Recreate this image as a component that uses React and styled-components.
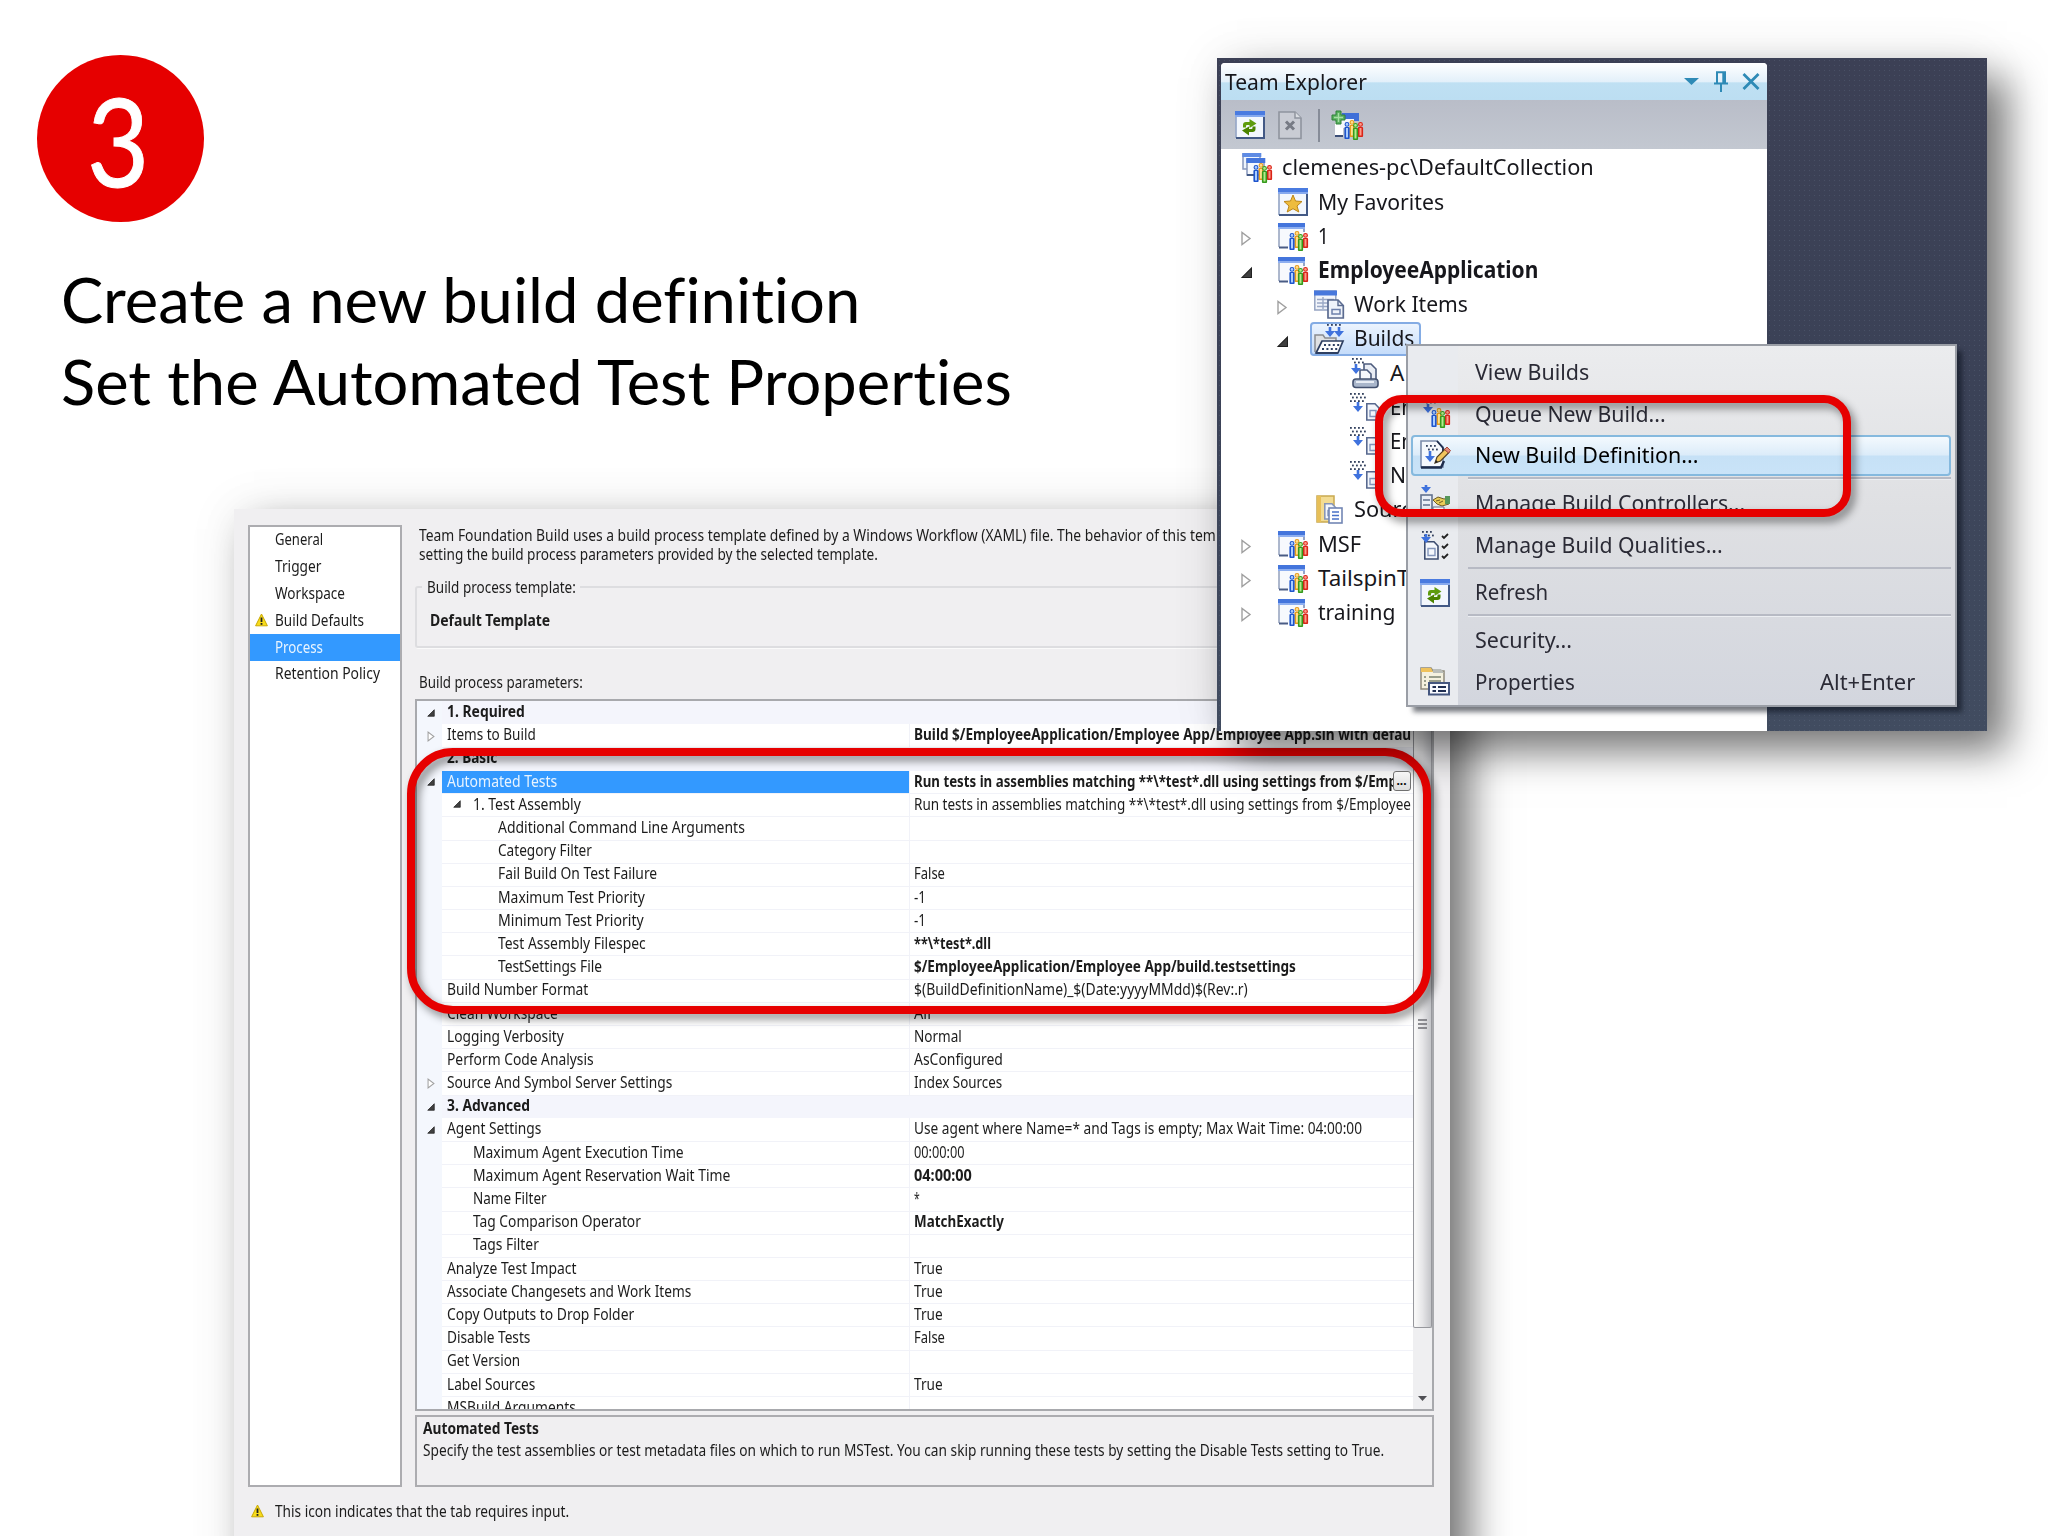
import React, { useLayoutEffect, useRef, useState } from "react";
import styled, { createGlobalStyle, css } from "styled-components";

const GlobalStyle = createGlobalStyle`
  * { box-sizing: border-box; }
  body {
    margin: 0;
    background: #fff;
    font-family: "Noto Sans", "Open Sans", sans-serif;
  }
`;

/* ---------- text that is squeezed to a given width ---------- */

const FitBox = styled.span`
  display: block;
  flex: none;
  white-space: pre;
`;
const FitInner = styled.span`
  display: inline-block;
  transform-origin: 0 50%;
`;

function Fit({ w, children }) {
  const ref = useRef(null);
  const [scale, setScale] = useState(1);
  useLayoutEffect(() => {
    if (w) setScale(w / ref.current.offsetWidth);
  }, [w, children]);
  return (
    <FitBox style={{ width: w }}>
      <FitInner ref={ref} style={{ transform: `scaleX(${scale})` }}>
        {children}
      </FitInner>
    </FitBox>
  );
}

/* ---------- slide ---------- */

const Slide = styled.main`
  position: relative;
  width: 2048px;
  height: 1536px;
  overflow: hidden;
  background: #fff;
`;
const Intro = styled.header`
  display: flex;
  flex-direction: column;
  align-items: flex-start;
  padding: 55px 0 0 37px;
  font-family: Lato, sans-serif;
  font-variant-ligatures: none;
`;
const StepNumber = styled.div`
  width: 167px;
  height: 167px;
  border-radius: 50%;
  background: #e60000;
  color: #fff;
  font-size: 123px;
  line-height: 169px;
  padding-left: 50px;
  -webkit-text-stroke: 1px #fff;
`;
const Title = styled.h1`
  margin: 37px 0 0 24px;
  font-size: 61px;
  font-weight: 400;
  line-height: 82px;
  color: #000;
`;
const Ring = styled.div`
  position: absolute;
  left: ${(p) => p.$x}px;
  top: ${(p) => p.$y}px;
  width: ${(p) => p.$w}px;
  height: ${(p) => p.$h}px;
  border: 8.4px solid #e60000;
  border-radius: ${(p) => p.$r}px;
  filter: drop-shadow(4px 5px 4px rgba(0, 0, 0, 0.45));
`;

/* ---------- build definition panel ---------- */

const BuildPanel = styled.section`
  position: absolute;
  left: 234px;
  top: 509px;
  width: 1216px;
  height: 1080px;
  padding: 16px 16px 0 14px;
  background: #f0eff1;
  box-shadow: 20px 20px 38px rgba(0, 0, 0, 0.52), 0 0 50px rgba(0, 0, 0, 0.07);
  font-size: 15.5px;
  color: #1c1c1c;
`;
const PanelBody = styled.div`
  display: flex;
  gap: 13px;
  height: 962px;
`;
const Tabs = styled.nav`
  width: 154px;
  border: 2px solid #acacb0;
  background: #fff;
`;
const Tab = styled.div`
  display: flex;
  align-items: center;
  height: 26.8px;
  line-height: 24px;
  padding-bottom: 2px;
  ${(p) =>
    p.$active &&
    css`
      background: #3399ff;
      color: #e8f4ff;
    `}
`;
const TabIcon = styled.span`
  display: flex;
  width: 25px;
  padding-left: 4.5px;
`;
const Content = styled.div`
  flex: 1;
  display: flex;
  flex-direction: column;
`;
const Description = styled.div`
  padding: 1px 0 0 4px;
  line-height: 18.6px;
`;
const TemplateGroup = styled.fieldset`
  margin: 14px 0 0 0;
  padding: 12px 0 0 12.5px;
  height: 71px;
  min-width: 0;
  border: 2px solid #dddde0;
  border-radius: 3px;
  box-shadow: 0 2px 0 -1px #fafafa;
  legend {
    padding: 0 4px 0 5px;
    margin-left: -8px;
    line-height: 20px;
  }
`;
const GridLabel = styled.div`
  margin: 24px 0 0 4px;
  height: 27px;
  line-height: 21px;
`;
const Grid = styled.div`
  display: flex;
  height: 713px;
  border: 2px solid #a8a9ad;
  background: #fff;
  overflow: hidden;
`;
const Rows = styled.div`
  flex: 1;
  min-width: 0;
  overflow: hidden;
`;
const Row = styled.div`
  display: grid;
  grid-template-columns: 25px 467px 1fr;
  height: 23.2px;
  line-height: 21px;
  background: ${(p) => (p.$category ? "#f4f5fc" : "#fff")};
  font-weight: ${(p) => (p.$category ? 700 : 400)};
`;
const Gutter = styled.div`
  display: flex;
  align-items: center;
  justify-content: center;
  padding-left: 2px;
  background: #f4f7fd;
`;
const NameCell = styled.div`
  display: flex;
  align-items: center;
  padding-left: ${(p) => 5 + p.$level * 25.7}px;
  padding-bottom: 1.5px;
  border-bottom: 1px solid ${(p) => (p.$category ? "transparent" : "#f1f2f8")};
  ${(p) =>
    p.$selected &&
    css`
      background: #3399ff;
      color: #e8f4ff;
    `}
`;
const InlineArrow = styled.span`
  display: flex;
  width: 20px;
  margin-left: -20px;
`;
const ValueCell = styled.div`
  display: flex;
  align-items: center;
  min-width: 0;
  padding: 0 0 1.5px 4px;
  overflow: hidden;
  border-left: 1px solid ${(p) => (p.$category ? "transparent" : "#f1f2f8")};
  border-bottom: 1px solid ${(p) => (p.$category ? "transparent" : "#f1f2f8")};
  font-weight: ${(p) => (p.$bold ? 700 : 400)};
`;
const MoreButton = styled.button`
  position: relative;
  z-index: 1;
  flex: none;
  width: 18px;
  height: 20px;
  margin-left: -4.5px;
  padding: 0;
  border: 1.5px solid #707070;
  border-radius: 3px;
  background: linear-gradient(#f6f6f6, #dcdcdc);
  font: 700 12px/12px "Noto Sans", sans-serif;
`;
const ScrollBar = styled.div`
  display: flex;
  flex-direction: column;
  width: 19.5px;
  background: #efeff1;
`;
const Thumb = styled.div`
  display: flex;
  align-items: center;
  justify-content: center;
  height: 627px;
  padding-top: 20px;
  border: 1.5px solid #97989d;
  border-top: 0;
  border-radius: 2px;
  background: linear-gradient(90deg, #f7f7f7 10%, #e6e6e8 50%, #c4c5c9);
`;
const ScrollArrow = styled.div`
  display: flex;
  flex: 1;
  align-items: flex-end;
  justify-content: center;
  padding-bottom: 7px;
`;
const HelpBox = styled.div`
  margin-top: 4px;
  height: 72px;
  padding: 0 5.5px;
  border: 2px solid #acacb0;
  line-height: 22px;
  strong { display: block; }
`;
const Footer = styled.div`
  display: flex;
  align-items: center;
  gap: 11px;
  padding: 13px 0 0 3px;
`;

/* ---------- team explorer ---------- */

const ExplorerWindow = styled.section`
  position: absolute;
  left: 1217px;
  top: 58px;
  width: 770px;
  height: 673px;
  padding: 5px 0 0 4px;
  background:
    radial-gradient(circle, rgba(110, 125, 145, 0.28) 0.7px, transparent 1px) 0 0 / 5px 5px,
    linear-gradient(#3c4055, #3b4257 50%, #414c60);
  box-shadow: 20px 20px 38px rgba(0, 0, 0, 0.52), 0 0 50px rgba(0, 0, 0, 0.07);
  font-size: 22.4px;
  color: #17171c;
`;
const Explorer = styled.div`
  display: flex;
  flex-direction: column;
  width: 546px;
  height: 668px;
  background: #fff;
  border-radius: 4px 4px 0 0;
  overflow: hidden;
`;
const TitleBar = styled.div`
  display: flex;
  align-items: center;
  height: 37px;
  line-height: 36px;
  padding: 0 7px 0 4px;
  background: linear-gradient(#ffffff, #e3f0fa 50%, #bfe0f3 54%, #bcdef2);
`;
const TitleButtons = styled.div`
  display: flex;
  align-items: center;
  gap: 14.5px;
  margin-left: auto;
`;
const Toolbar = styled.div`
  display: flex;
  align-items: center;
  height: 49px;
  padding: 1px 0 0 14px;
  background: linear-gradient(#b9bdc8, #c3c8d1);
`;
const ToolDivider = styled.span`
  width: 2px;
  height: 33px;
  margin: 0 12px 0 15.5px;
  background: #868c98;
`;
const ToolGap = styled.span`
  width: 13px;
`;
const Tree = styled.div`
  padding-top: 2.4px;
`;
const TreeRow = styled.div`
  display: flex;
  align-items: center;
  height: 34.2px;
  line-height: 30px;
  padding-left: ${(p) => (p.$level ? p.$level * 36 - 18 : 0)}px;
  font-weight: ${(p) => (p.$bold ? 700 : 400)};
`;
const TreeArrow = styled.span`
  display: flex;
  align-items: center;
  width: ${(p) => (p.$root ? 21 : 39)}px;
  padding: 4px 0 0 2px;
`;
const TreeLabel = styled.span`
  padding-bottom: 2px;
`;
const TreeItem = styled.span`
  display: flex;
  align-items: center;
  gap: 10px;
  height: 34px;
  ${(p) =>
    p.$selected &&
    css`
      margin-left: -4px;
      padding: 0 4px 0 2px;
      width: 111px;
      border: 2px solid #84ace4;
      border-radius: 4px;
      background: linear-gradient(#ecf4fe, #c5dcfa);
    `}
`;

const Menu = styled.div`
  position: absolute;
  left: 188.5px;
  top: 286px;
  width: 551.5px;
  height: 363px;
  padding: 6px 4px 0 3.5px;
  border: 2px solid #9a9ea6;
  background:
    linear-gradient(90deg, #e9ebef 50px, transparent 50px),
    linear-gradient(#ebecee, #dfe0e3 45%, #d3d6de);
  box-shadow: 6px 6px 5px -1px rgba(10, 14, 25, 0.55);
  color: #2a2a35;
`;
const MenuItem = styled.div`
  display: flex;
  align-items: center;
  height: 41.8px;
  line-height: 36px;
  padding-right: 34px;
  border: 2px solid transparent;
  ${(p) =>
    p.$active &&
    css`
      margin: -1px 0 1px;
      border-color: #85b9de;
      border-radius: 4px;
      background: linear-gradient(#f3f9fe, #dcecf9 48%, #c6e1f6 52%, #c9e3f8);
      color: #000;
    `}
`;
const MenuIcon = styled.span`
  display: flex;
  width: 62px;
  padding-left: 7px;
`;
const MenuLabel = styled.span`
  padding-bottom: 1.4px;
`;
const Shortcut = styled.span`
  margin-left: auto;
  padding-bottom: 1.4px;
`;
const MenuRule = styled.div`
  height: 5.6px;
  margin-left: 57px;
  background: linear-gradient(#b7bac4 1.5px, #eceef2 1.5px, #eceef2 2.5px, transparent 2.5px);
`;

/* ---------- icons ---------- */

const Drawing = styled.svg`
  flex: none;
  overflow: visible;
`;

function Svg({ w = 30, h = 30, box, children }) {
  return (
    <Drawing width={w} height={h} viewBox={box || `0 0 ${w} ${h}`} fill="none">
      {children}
    </Drawing>
  );
}

const Expanded = ({ size = 11 }) => (
  <Svg w={size} h={size} box="0 0 11 11">
    <path d="M10 1V10H1Z" fill="#404040" stroke="#1e1e1e" />
  </Svg>
);
const Collapsed = ({ w = 10, h = 15 }) => (
  <Svg w={w} h={h} box="0 0 10 15">
    <path d="M1 1.5V13.5L9 7.5Z" fill="#fff" stroke="#a0a0a0" strokeWidth="1.4" />
  </Svg>
);

function Warning() {
  return (
    <Svg w={13} h={14}>
      <path d="M6.5 1L12.4 12.8H0.6Z" fill="#f8dc1c" stroke="#c9a800" strokeLinejoin="round" />
      <path d="M6.5 4.5V9" stroke="#222" strokeWidth="1.8" />
      <rect x="5.6" y="10" width="1.8" height="1.8" fill="#222" />
    </Svg>
  );
}

function Frame({ x = 0, y = 0, w = 29, h = 27 }) {
  return (
    <g transform={`translate(${x} ${y})`}>
      <rect x="0.7" y="0.7" width={w} height={h} fill="#f3f7fd" />
      <path d={`M1 1V${h}`} stroke="#92a3c4" strokeWidth="1.6" />
      <path d={`M${w} 1V${h}H1`} stroke="#435985" strokeWidth="2" />
      <rect y="0" width={w + 1} height="6" fill="#4a7be0" />
      <rect y="4" width={w + 1} height="2" fill="#86a9ee" />
    </g>
  );
}

function Person({ x, y, color, light, h = 12 }) {
  return (
    <g transform={`translate(${x} ${y})`}>
      <circle cx="3" cy="2.4" r="1.9" fill={light} stroke={color} strokeWidth="1.1" />
      <rect x="0.4" y="5" width="5.2" height={h} rx="1" fill={color} />
      <path d={`M3 6V${h + 3.5}`} stroke={light} strokeWidth="2" />
    </g>
  );
}

function People({ x = 11, y = 9 }) {
  return (
    <g transform={`translate(${x} ${y})`}>
      <Person x={5} y={0} color="#e69a1e" light="#ffdf8a" />
      <Person x={13.5} y={2} color="#d92418" light="#ff9a88" h={10} />
      <Person x={0} y={2} color="#1f55cc" light="#a9ccff" />
      <Person x={8.5} y={3} color="#359a1d" light="#b4eb8c" />
    </g>
  );
}

const ProjectIcon = () => (
  <Svg>
    <rect x="0.7" y="1" width="26" height="25" fill="#f7f9fd" />
    <path d="M1 1V25" stroke="#93a0bc" strokeWidth="1.5" />
    <path d="M1 25.5H10" stroke="#4a5c85" strokeWidth="2" />
    <path d="M26 6V10" stroke="#7387b3" strokeWidth="1.5" />
    <rect y="1" width="27" height="5.5" fill="#4475dc" />
    <rect y="5" width="27" height="2" fill="#8eaff0" />
    <People />
  </Svg>
);
const CollectionIcon = () => (
  <Svg>
    <rect x="1" y="1" width="17" height="15" fill="#eef4fd" stroke="#8797bb" strokeWidth="1.5" />
    <rect x="0.3" y="0" width="19" height="4" fill="#5e8be4" />
    <rect x="5" y="6" width="17" height="16" fill="#f5f8fe" stroke="#8797bb" strokeWidth="1.5" />
    <rect x="4.3" y="5" width="19" height="5" fill="#4475dc" />
    <path d="M5 22H12" stroke="#435985" strokeWidth="2" />
    <People y={10} />
  </Svg>
);
const AddProjectIcon = () => (
  <Svg w={31} h={30}>
    <path d="M3 12V26H11V12Z" fill="#fff" />
    <path d="M3 26H11" stroke="#3d4f78" strokeWidth="2" />
    <rect x="10" y="3" width="17" height="8" fill="#3f6fd8" />
    <rect x="8" y="9" width="14" height="9" fill="#f3f6fc" />
    <path d="M4 1H9V5H13V10H9V14H4V10H0V5H4Z" fill="#58b05e" stroke="#2f8039" />
    <path d="M6.500 3V12M2 7.500H11" stroke="#a5dfa3" strokeWidth="1.4" />
    <People x={12} y={10} />
  </Svg>
);
const RefreshIcon = () => (
  <Svg h={29}>
    <Frame />
    <path d="M8 16.500V14Q8 11 11 11H14.500V8L21.500 12.500L14.500 17V14H12Q11 14 11 15V16.500Z" fill="#5e9c0e" />
    <path d="M20.500 15.500V18Q20.500 21 17.500 21H14V24.500L7 19.500L14 15.500V18H16.500Q17.500 18 17.500 17V15.500Z" fill="#4b8400" />
  </Svg>
);
const StarIcon = () => (
  <Svg>
    <Frame />
    <path d="M15 7L17.500 13L24 13.500L19 18L20.800 24L15 20.700L9.200 24L11 18L6 13.500L12.500 13Z" fill="#eebc3e" stroke="#bc8618" />
  </Svg>
);
const DeletePageIcon = () => (
  <Svg w={24} h={29}>
    <path d="M1 1H17L23 7V27.500H1Z" fill="#c9ccd4" stroke="#8f949e" strokeWidth="1.6" />
    <path d="M17 1V7H23" stroke="#8f949e" strokeWidth="1.5" fill="#dadde2" />
    <path d="M8 10.500L16 18.500M16 10.500L8 18.500" stroke="#777b85" strokeWidth="3" />
  </Svg>
);

function Arrow({ x = 8, y = 0, h = 10 }) {
  return (
    <path
      transform={`translate(${x} ${y})`}
      d={`M-1.3 0H1.300V${h - 6}H5L0 ${h}L-5 ${h - 6}H-1.300Z`}
      fill="#3f72dd"
    />
  );
}
function Dots({ x = 0, y = 0, rows = 3, cols = 4 }) {
  const dots = [];
  for (let r = 0; r < rows; r++) {
    for (let c = 0; c < cols; c++) {
      dots.push(<rect key={`${r}-${c}`} x={x + c * 4 + (r % 2 ? 2 : 0)} y={y + r * 3.6} width="1.8" height="1.8" fill="#33415e" />);
    }
  }
  return <g>{dots}</g>;
}
function Page({ x, y, w = 12, h = 15, stroke = "#58698f" }) {
  return (
    <g transform={`translate(${x} ${y})`}>
      <path d={`M0.800 0.800H${w - 4}L${w} 5V${h}H0.800Z`} fill="#f4f7fc" stroke={stroke} strokeWidth="1.6" />
      <path d={`M4 7.500H${w - 3}V${h - 3.5}H4Z`} stroke="#8496bb" strokeWidth="1.4" />
    </g>
  );
}

const WorkItemsIcon = () => (
  <Svg>
    <rect x="0.8" y="1" width="21" height="19" fill="#f2f5fb" stroke="#96a4c2" strokeWidth="1.5" />
    <rect x="0" y="0.500" width="23" height="5" fill="#4878dc" />
    <path d="M3 9.500H20M3 13H20M3 16.500H14M9 7V19" stroke="#9aa8c6" strokeWidth="1.4" />
    <path d="M14 10H24L29.300 15.500V28H14Z" fill="#eff3fa" stroke="#5b6b90" strokeWidth="1.7" />
    <path d="M24 10V15.500H29" stroke="#5b6b90" strokeWidth="1.4" />
    <rect x="18" y="19.500" width="8" height="4.500" stroke="#6d80ab" strokeWidth="1.5" />
  </Svg>
);
const BuildsIcon = () => (
  <Svg>
    <path d="M1 28V11H9L11 14H22V18" fill="#dfe1e3" stroke="#8a8c90" strokeWidth="1.5" />
    <path d="M2 29L8 17H29L24 29Z" fill="#fdfdfd" stroke="#2e3f61" strokeWidth="1.7" />
    <path d="M2 29H24" stroke="#2e3f61" strokeWidth="2" />
    <Arrow x={16} y={3} h={10} />
    <Arrow x={25} y={3} h={10} />
    <Dots x={13} y={0} rows={1} />
    <path d="M10 21H26M8 25H24" stroke="#2e3f61" strokeWidth="1.8" strokeDasharray="2 2.4" />
  </Svg>
);
const AllDefsIcon = () => (
  <Svg>
    <path d="M14 5H21L26 10V23H14Z" fill="#e9edf4" stroke="#4d5c7d" strokeWidth="1.6" />
    <path d="M10 11H17L21 15V22H10Z" fill="#f6f8fb" stroke="#4d5c7d" strokeWidth="1.6" />
    <Dots x={2} y={-1} rows={2} cols={3} />
    <Arrow x={6} y={5} h={10} />
    <rect x="3" y="20" width="25" height="8.500" rx="3" fill="#a9b6cb" stroke="#43516f" strokeWidth="1.6" />
    <path d="M6 23H24" stroke="#e8edf5" strokeWidth="2" />
  </Svg>
);
const DefIcon = () => (
  <Svg>
    <Dots x={0} y={0} />
    <Arrow x={8} y={9} h={10} />
    <Page x={16} y={10} w={13} h={17} />
  </Svg>
);
const SourceIcon = () => (
  <Svg>
    <path d="M3 1H20V27H3Z" fill="#f3dc93" stroke="#c9a950" strokeWidth="1.5" />
    <path d="M3 27V1H7V27Z" fill="#e7bf58" />
    <Page x={10} y={8} w={12} h={16} stroke="#8796b6" />
    <rect x="15" y="13" width="13" height="15" fill="#fff" stroke="#7286b4" strokeWidth="1.6" />
    <path d="M18 17H25M18 20.500H25M18 24H25" stroke="#4a72c8" strokeWidth="1.6" />
  </Svg>
);
const QueueIcon = () => (
  <Svg>
    <Dots x={4} y={-2} rows={2} cols={3} />
    <Arrow x={8} y={4} h={9} />
    <People y={8} />
  </Svg>
);
const NewDefIcon = () => (
  <Svg>
    <path d="M1 1H17L23 7V27H1Z" fill="#f5f8fd" stroke="#7c8cab" strokeWidth="1.6" />
    <path d="M1 27.500H21L24 21" stroke="#1d2c4c" strokeWidth="2.4" />
    <path d="M17 1L23 8V12" stroke="#1d2c4c" strokeWidth="1.8" />
    <Dots x={6} y={5} rows={2} cols={3} />
    <Arrow x={10} y={11} h={11} />
    <path d="M15 23L17 17L25 9L29 12.500L20.500 21Z" fill="#f0c45c" stroke="#4e3d22" strokeWidth="1.2" />
    <path d="M24.500 9.500L27 7L30.500 10.500L28.500 13Z" fill="#e08a78" stroke="#a8493c" />
    <path d="M15 23L16 20L18 22Z" fill="#222" />
  </Svg>
);
const ControllersIcon = () => (
  <Svg>
    <Arrow x={6} y={-4} h={8} />
    <rect x="1" y="6" width="11" height="21" fill="#e9eef6" stroke="#62728f" strokeWidth="1.6" />
    <path d="M3 11H10M3 16H10M3 21H10" stroke="#62728f" strokeWidth="1.5" />
    <path d="M13 11L18 8L24 10L29 9V15L22 17L17 15Z" fill="#e9cd58" stroke="#6e5b23" />
    <path d="M16 12L20 11M19 14L23 12" stroke="#6e5b23" />
    <rect x="25" y="7" width="5" height="8" fill="#56965a" />
    <path d="M13 18H24V27H13Z" fill="#fff" stroke="#62728f" />
  </Svg>
);
const QualitiesIcon = () => (
  <Svg>
    <Dots x={2} y={0} rows={2} cols={3} />
    <Page x={4} y={10} w={14} h={18} stroke="#3d4d70" />
    <Arrow x={6} y={3} h={9} />
    <path d="M22 5L24 7L28 3M22 15L24 17L28 13M22 25L24 27L28 23" stroke="#222" strokeWidth="1.8" />
  </Svg>
);
const PropertiesIcon = () => (
  <Svg>
    <path d="M1 1H11L13 4H24V22H1Z" fill="#f4f1df" stroke="#8e8b7c" strokeWidth="1.5" />
    <path d="M1 1H11L13 5H1Z" fill="#efc25c" />
    <path d="M13 2H21L24 6H13Z" fill="#b9bdb9" />
    <path d="M4 10H6M4 14H6M4 18H6M9 10H21M9 14H21" stroke="#7b8372" strokeWidth="1.6" />
    <rect x="9" y="16" width="20" height="11.500" fill="#f8faff" stroke="#44567f" strokeWidth="2" />
    <path d="M12.500 20H16M12.500 24H16M18 20H26M18 24H26" stroke="#1f2e52" strokeWidth="1.8" />
  </Svg>
);

/* ---------- data ---------- */

const tabs = [
  { label: "General", w: 48 },
  { label: "Trigger", w: 46 },
  { label: "Workspace", w: 70 },
  { label: "Build Defaults", w: 89, warn: true },
  { label: "Process", w: 48, active: true },
  { label: "Retention Policy", w: 105 },
];

const rows = [
  { name: "1. Required", w: 78, category: true, state: "open" },
  { name: "Items to Build", w: 89, state: "closed", value: "Build $/EmployeeApplication/Employee App/Employee App.sln with defau", vw: 497, bold: true },
  { name: "2. Basic", w: 50, category: true },
  { name: "Automated Tests", w: 110, state: "open", selected: true, value: "Run tests in assemblies matching **\\*test*.dll using settings from $/Emp", vw: 483, bold: true },
  { name: "1. Test Assembly", w: 108, level: 1, inner: true, value: "Run tests in assemblies matching **\\*test*.dll using settings from $/Employee", vw: 497 },
  { name: "Additional Command Line Arguments", w: 247, level: 2 },
  { name: "Category Filter", w: 94, level: 2 },
  { name: "Fail Build On Test Failure", w: 159, level: 2, value: "False", vw: 31 },
  { name: "Maximum Test Priority", w: 147, level: 2, value: "-1", vw: 12 },
  { name: "Minimum Test Priority", w: 146, level: 2, value: "-1", vw: 12 },
  { name: "Test Assembly Filespec", w: 148, level: 2, value: "**\\*test*.dll", vw: 77, bold: true },
  { name: "TestSettings File", w: 104, level: 2, value: "$/EmployeeApplication/Employee App/build.testsettings", vw: 382, bold: true },
  { name: "Build Number Format", w: 141, value: "$(BuildDefinitionName)_$(Date:yyyyMMdd)$(Rev:.r)", vw: 334 },
  { name: "Clean Workspace", w: 111, value: "All", vw: 17 },
  { name: "Logging Verbosity", w: 117, value: "Normal", vw: 48 },
  { name: "Perform Code Analysis", w: 147, value: "AsConfigured", vw: 89 },
  { name: "Source And Symbol Server Settings", w: 225, state: "closed", value: "Index Sources", vw: 88 },
  { name: "3. Advanced", w: 83, category: true, state: "open" },
  { name: "Agent Settings", w: 94, state: "open", value: "Use agent where Name=* and Tags is empty; Max Wait Time: 04:00:00", vw: 448 },
  { name: "Maximum Agent Execution Time", w: 211, level: 1, value: "00:00:00", vw: 51 },
  { name: "Maximum Agent Reservation Wait Time", w: 257, level: 1, value: "04:00:00", vw: 58, bold: true },
  { name: "Name Filter", w: 74, level: 1, value: "*", vw: 6 },
  { name: "Tag Comparison Operator", w: 168, level: 1, value: "MatchExactly", vw: 90, bold: true },
  { name: "Tags Filter", w: 66, level: 1 },
  { name: "Analyze Test Impact", w: 129, value: "True", vw: 29 },
  { name: "Associate Changesets and Work Items", w: 244, value: "True", vw: 29 },
  { name: "Copy Outputs to Drop Folder", w: 187, value: "True", vw: 29 },
  { name: "Disable Tests", w: 83, value: "False", vw: 31 },
  { name: "Get Version", w: 73, value: "" },
  { name: "Label Sources", w: 88, value: "True", vw: 29 },
  { name: "MSBuild Arguments", w: 129 },
];

const tree = [
  { label: "clemenes-pc\\DefaultCollection", w: 312, level: 0, icon: <CollectionIcon /> },
  { label: "My Favorites", w: 126, level: 1, icon: <StarIcon /> },
  { label: "1", w: 11, level: 1, icon: <ProjectIcon />, state: "closed" },
  { label: "EmployeeApplication", w: 220, level: 1, icon: <ProjectIcon />, state: "open", bold: true },
  { label: "Work Items", w: 114, level: 2, icon: <WorkItemsIcon />, state: "closed" },
  { label: "Builds", w: 60, level: 2, icon: <BuildsIcon />, state: "open", selected: true },
  { label: "A", w: 14, level: 3, icon: <AllDefsIcon /> },
  { label: "Em", w: 30, level: 3, icon: <DefIcon /> },
  { label: "Em", w: 30, level: 3, icon: <DefIcon /> },
  { label: "N", w: 16, level: 3, icon: <DefIcon /> },
  { label: "Source", w: 70, level: 2, icon: <SourceIcon /> },
  { label: "MSF", w: 43, level: 1, icon: <ProjectIcon />, state: "closed" },
  { label: "TailspinToys", w: 125, level: 1, icon: <ProjectIcon />, state: "closed" },
  { label: "training", w: 77, level: 1, icon: <ProjectIcon />, state: "closed" },
];

const menu = [
  { label: "View Builds", w: 114 },
  { label: "Queue New Build...", w: 191, icon: <QueueIcon /> },
  { label: "New Build Definition...", w: 223, icon: <NewDefIcon />, active: true },
  { rule: true },
  { label: "Manage Build Controllers...", w: 270, icon: <ControllersIcon /> },
  { label: "Manage Build Qualities...", w: 248, icon: <QualitiesIcon /> },
  { rule: true },
  { label: "Refresh", w: 73, icon: <RefreshIcon /> },
  { rule: true },
  { label: "Security...", w: 97 },
  { label: "Properties", w: 100, icon: <PropertiesIcon />, shortcut: "Alt+Enter" },
];

/* ---------- parts ---------- */

function PropertyRow({ row }) {
  const level = row.level || 0;
  return (
    <Row $category={row.category}>
      <Gutter>
        {row.state === "open" && <Expanded size={8} />}
        {row.state === "closed" && <Collapsed w={8} h={11} />}
      </Gutter>
      <NameCell $level={level} $selected={row.selected} $category={row.category}>
        {row.inner && (
          <InlineArrow>
            <Expanded size={8} />
          </InlineArrow>
        )}
        <Fit w={row.w}>{row.name}</Fit>
      </NameCell>
      <ValueCell $bold={row.bold} $category={row.category}>
        {row.value && <Fit w={row.vw}>{row.value}</Fit>}
        {row.selected && <MoreButton>...</MoreButton>}
      </ValueCell>
    </Row>
  );
}

function BuildDefinition() {
  return (
    <BuildPanel>
      <PanelBody>
        <Tabs>
          {tabs.map((tab) => (
            <Tab key={tab.label} $active={tab.active}>
              <TabIcon>{tab.warn && <Warning />}</TabIcon>
              <Fit w={tab.w}>{tab.label}</Fit>
            </Tab>
          ))}
        </Tabs>
        <Content>
          <Description>
            <Fit w={797}>Team Foundation Build uses a build process template defined by a Windows Workflow (XAML) file. The behavior of this tem</Fit>
            <Fit w={459}>setting the build process parameters provided by the selected template.</Fit>
          </Description>
          <TemplateGroup>
            <legend><Fit w={149}>Build process template:</Fit></legend>
            <strong><Fit w={120}>Default Template</Fit></strong>
          </TemplateGroup>
          <GridLabel><Fit w={164}>Build process parameters:</Fit></GridLabel>
          <Grid>
            <Rows>
              {rows.map((row) => (
                <PropertyRow key={row.name} row={row} />
              ))}
            </Rows>
            <ScrollBar>
              <Thumb>
                <Svg w={9} h={10}>
                  <path d="M0 1H9M0 5H9M0 9H9" stroke="#6d6e73" strokeWidth="1.6" />
                </Svg>
              </Thumb>
              <ScrollArrow>
                <Svg w={9} h={6}>
                  <path d="M0 0H9L4.500 5Z" fill="#505055" />
                </Svg>
              </ScrollArrow>
            </ScrollBar>
          </Grid>
          <HelpBox>
            <strong><Fit w={116}>Automated Tests</Fit></strong>
            <Fit w={961}>Specify the test assemblies or test metadata files on which to run MSTest. You can skip running these tests by setting the Disable Tests setting to True.</Fit>
          </HelpBox>
        </Content>
      </PanelBody>
      <Footer>
        <Warning />
        <Fit w={294}>This icon indicates that the tab requires input.</Fit>
      </Footer>
    </BuildPanel>
  );
}

function ContextMenu() {
  return (
    <Menu>
      {menu.map((item, i) =>
        item.rule ? (
          <MenuRule key={i} />
        ) : (
          <MenuItem key={i} $active={item.active}>
            <MenuIcon>{item.icon}</MenuIcon>
            <MenuLabel><Fit w={item.w}>{item.label}</Fit></MenuLabel>
            {item.shortcut && (
              <Shortcut><Fit w={95}>{item.shortcut}</Fit></Shortcut>
            )}
          </MenuItem>
        )
      )}
    </Menu>
  );
}

function TeamExplorer() {
  return (
    <ExplorerWindow>
      <Explorer>
        <TitleBar>
          <Fit w={142}>Team Explorer</Fit>
          <TitleButtons>
            <Svg w={15} h={7}><path d="M0 0H15L7.500 7Z" fill="#2e8ab6" /></Svg>
            <Svg w={14} h={21}>
              <path d="M3 12V1.200H11V12M0 12.500H14M7 12.500V21" stroke="#2e8ab6" strokeWidth="2" />
              <path d="M9.500 2V12" stroke="#2e8ab6" strokeWidth="2.400" />
            </Svg>
            <Svg w={18} h={17}><path d="M1.500 1L16.500 16M16.500 1L1.500 16" stroke="#2e8ab6" strokeWidth="2.800" /></Svg>
          </TitleButtons>
        </TitleBar>
        <Toolbar>
          <RefreshIcon />
          <ToolGap />
          <DeletePageIcon />
          <ToolDivider />
          <AddProjectIcon />
        </Toolbar>
        <Tree>
          {tree.map((node, i) => (
            <TreeRow key={i} $level={node.level} $bold={node.bold}>
              <TreeArrow $root={node.level === 0}>
                {node.state === "open" && <Expanded size={11.5} />}
                {node.state === "closed" && <Collapsed />}
              </TreeArrow>
              <TreeItem $selected={node.selected}>
                {node.icon}
                <TreeLabel><Fit w={node.w}>{node.label}</Fit></TreeLabel>
              </TreeItem>
            </TreeRow>
          ))}
        </Tree>
      </Explorer>
      <ContextMenu />
    </ExplorerWindow>
  );
}

export default function App() {
  return (
    <>
      <GlobalStyle />
      <Slide>
        <Intro>
          <StepNumber><Fit w={62}>3</Fit></StepNumber>
          <Title>
            <Fit w={799}>Create a new build definition</Fit>
            <Fit w={951}>Set the Automated Test Properties</Fit>
          </Title>
        </Intro>
        <BuildDefinition />
        <Ring $x={407} $y={748} $w={1024} $h={266} $r={46} />
        <TeamExplorer />
        <Ring $x={1375} $y={395} $w={476} $h={122} $r={27} />
      </Slide>
    </>
  );
}
